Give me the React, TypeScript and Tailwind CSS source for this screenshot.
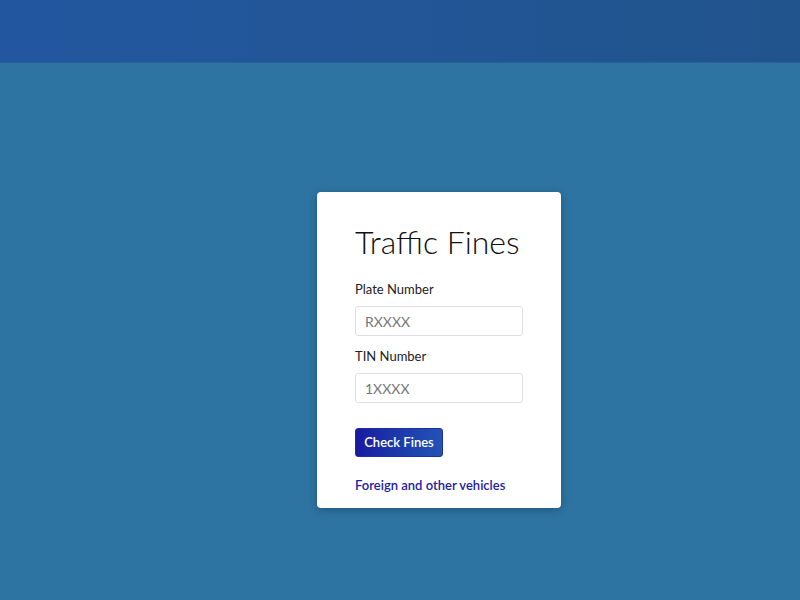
import React from "react";

export default function App() {
  return (
    <div className="min-h-[600px] w-full bg-[#2d74a2] flex flex-col" style={{ fontFamily: "Lato, 'Noto Sans', sans-serif" }}>
      <div className="h-[63px] bg-gradient-to-r from-[#2257a0] to-[#21548c] border-b border-[#2a5f99]" />
      <div className="flex justify-center pt-[129px] pl-[78px]">
        <div className="w-[244px] bg-white rounded-[4px] shadow-[0_2px_8px_rgba(0,0,0,0.25)] pl-[38px] pr-[38px] pt-[30px] pb-[15px]">
          <h1 className="text-[32px] font-light leading-[40px] text-[#111] whitespace-nowrap">Traffic Fines</h1>
          <div className="mt-[19px] text-[13px] text-[#222] leading-[16px]">Plate Number</div>
          <input
            className="block mt-[9px] w-[168px] h-[30px] border border-[#dcdfe4] rounded-[3px] px-[9px] text-[14px] text-[#555] placeholder-[#777] outline-none"
            placeholder="RXXXX"
          />
          <div className="mt-[12px] text-[13px] text-[#222] leading-[16px]">TIN Number</div>
          <input
            className="block mt-[9px] w-[168px] h-[30px] border border-[#dcdfe4] rounded-[3px] px-[9px] text-[14px] text-[#555] placeholder-[#777] outline-none"
            placeholder="1XXXX"
          />
          <div className="mt-[25px] flex">
            <button className="h-[29px] w-[88px] rounded-[3px] bg-gradient-to-r from-[#1a19a0] to-[#2452b5] text-white text-[13px] font-semibold border border-[#1e2fa0]">
              Check Fines
            </button>
          </div>
          <div className="mt-[20px] text-[13px] font-semibold text-[#1d1ca3] leading-[16px]">Foreign and other vehicles</div>
        </div>
      </div>
    </div>
  );
}
